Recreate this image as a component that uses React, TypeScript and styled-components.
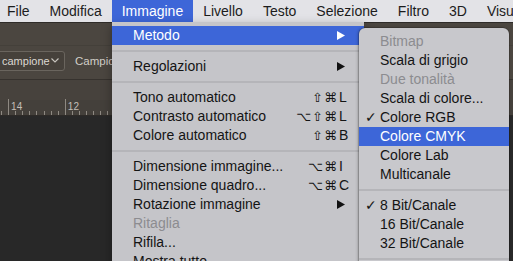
import React from "react";
import styled, { createGlobalStyle } from "styled-components";

const GlobalStyle = createGlobalStyle`
  html, body {
    margin: 0;
    padding: 0;
    background: #282828;
    overflow: hidden;
  }
  * {
    box-sizing: border-box;
  }
`;

const MENU_FONT = `"Liberation Sans", Arial, sans-serif`;
const GLYPH_FONT = `"DejaVu Sans", "Liberation Sans", sans-serif`;

interface MenuItem {
  label: string;
  disabled?: boolean;
  active?: boolean;
  checked?: boolean;
  submenu?: boolean;
  mods?: string;
  keyChar?: string;
  separator?: boolean;
}

const topMenus = [
  "File",
  "Modifica",
  "Immagine",
  "Livello",
  "Testo",
  "Selezione",
  "Filtro",
  "3D",
  "Visualizza",
];

const mainItems: MenuItem[] = [
  { label: "Metodo", submenu: true, active: true },
  { label: "", separator: true },
  { label: "Regolazioni", submenu: true },
  { label: "", separator: true },
  { label: "Tono automatico", mods: "⇧⌘", keyChar: "L" },
  { label: "Contrasto automatico", mods: "⌥⇧⌘", keyChar: "L" },
  { label: "Colore automatico", mods: "⇧⌘", keyChar: "B" },
  { label: "", separator: true },
  { label: "Dimensione immagine...", mods: "⌥⌘", keyChar: "I" },
  { label: "Dimensione quadro...", mods: "⌥⌘", keyChar: "C" },
  { label: "Rotazione immagine", submenu: true },
  { label: "Ritaglia", disabled: true },
  { label: "Rifila..." },
  { label: "Mostra tutto" },
];

const modeItems: MenuItem[] = [
  { label: "Bitmap", disabled: true },
  { label: "Scala di grigio" },
  { label: "Due tonalità", disabled: true },
  { label: "Scala di colore..." },
  { label: "Colore RGB", checked: true },
  { label: "Colore CMYK", active: true },
  { label: "Colore Lab" },
  { label: "Multicanale" },
  { label: "", separator: true },
  { label: "8 Bit/Canale", checked: true },
  { label: "16 Bit/Canale" },
  { label: "32 Bit/Canale" },
  { label: "", separator: true },
];

const rulerTicks = Array.from({ length: 17 }, (_, i) => i);

const Arrow = ({ color }: { color: string }) => (
  <svg width="8" height="9" viewBox="0 0 8 9">
    <path d="M0 0 L8 4.5 L0 9 Z" fill={color} />
  </svg>
);

const Chevron = () => (
  <svg width="8" height="5" viewBox="0 0 8 5">
    <path d="M0.5 0.5 L4 4 L7.5 0.5" stroke="#c9c5bf" strokeWidth="1.1" fill="none" />
  </svg>
);

const renderRows = (items: MenuItem[]) =>
  items.map((item, i) =>
    item.separator ? (
      <Separator key={i} />
    ) : (
      <Row key={i} $active={item.active} $disabled={item.disabled}>
        <Mark>{item.checked ? "✓" : ""}</Mark>
        <Label>{item.label}</Label>
        {item.submenu && (
          <ArrowBox>
            <Arrow color={item.active ? "#ffffff" : "#111111"} />
          </ArrowBox>
        )}
        {item.keyChar && (
          <Shortcut>
            <Mods>{item.mods}</Mods>
            <KeyChar>{item.keyChar}</KeyChar>
          </Shortcut>
        )}
      </Row>
    )
  );

const App = () => {
  return (
    <Screen>
      <GlobalStyle />
      <MenuBar>
        {topMenus.map((m) => (
          <TopItem key={m} $open={m === "Immagine"}>
            {m}
          </TopItem>
        ))}
      </MenuBar>
      <Workspace>
        <OptionsBar>
          <UpperStrip />
          <ControlsRow>
            <Select>
              <span>campione</span>
              <Chevron />
            </Select>
            <OptionLabel>Campione:</OptionLabel>
          </ControlsRow>
        </OptionsBar>
        <TabStrip />
        <Ruler>
          {rulerTicks.map((t) => (
            <Tick key={t} $major={t % 8 === 1}>
              {t === 1 && <TickNum>14</TickNum>}
              {t === 9 && <TickNum>12</TickNum>}
            </Tick>
          ))}
        </Ruler>
        <Canvas />
      </Workspace>

      <Dropdown>{renderRows(mainItems)}</Dropdown>
      <Submenu>{renderRows(modeItems)}</Submenu>
    </Screen>
  );
};

const Screen = styled.div`
  position: relative;
  width: 513px;
  height: 261px;
  overflow: hidden;
  display: flex;
  flex-direction: column;
  background: #282828;
  font-family: ${MENU_FONT};
`;

const MenuBar = styled.div`
  display: flex;
  height: 22px;
  flex-shrink: 0;
  margin-left: -3px;
  background: #e3e3e7;
  white-space: nowrap;
`;

const TopItem = styled.div<{ $open?: boolean }>`
  padding: 0 10px;
  height: 22px;
  line-height: 22px;
  font-size: 14px;
  color: ${(p) => (p.$open ? "#ffffff" : "#1c1c1c")};
  background: ${(p) => (p.$open ? "#3d66d8" : "transparent")};
`;

const Workspace = styled.div`
  flex: 1;
  display: flex;
  flex-direction: column;
`;

const OptionsBar = styled.div`
  height: 58px;
  display: flex;
  flex-direction: column;
  background: #4b4640;
  border-top: 1px solid #2f2c29;
  border-bottom: 1px solid #36322e;
`;

const UpperStrip = styled.div`
  height: 23px;
  border-bottom: 1px solid #44403a;
`;

const ControlsRow = styled.div`
  flex: 1;
  display: flex;
  align-items: center;
  gap: 10px;
  padding-bottom: 4px;
`;

const Select = styled.div`
  display: flex;
  align-items: center;
  justify-content: space-between;
  width: 72px;
  height: 20px;
  margin-left: -7px;
  padding: 0 5px 0 8px;
  border: 1px solid #6a655e;
  border-radius: 3px;
  background: #46413b;
  color: #dcd8d2;
  font-size: 11px;
`;

const OptionLabel = styled.span`
  color: #d2cec8;
  font-size: 11.5px;
  white-space: nowrap;
`;

const TabStrip = styled.div`
  height: 20px;
  background: #47423d;
`;

const Ruler = styled.div`
  height: 16px;
  display: flex;
  align-items: flex-end;
  padding-left: 1px;
  background: #44403b;
  border-bottom: 1px solid #2d2a27;
`;

const Tick = styled.div<{ $major?: boolean }>`
  position: relative;
  width: 7.1px;
  flex-shrink: 0;
  height: ${(p) => (p.$major ? "16px" : "4px")};
  border-left: 1px solid #8e8982;
`;

const TickNum = styled.span`
  position: absolute;
  left: 2px;
  top: 2px;
  font-size: 10px;
  color: #c3beb6;
`;

const Canvas = styled.div`
  flex: 1;
  background: #282828;
`;

const MenuPanel = styled.div`
  position: absolute;
  display: flex;
  flex-direction: column;
  font-family: ${MENU_FONT};
  font-size: 14px;
`;

const Dropdown = styled(MenuPanel)`
  left: 112px;
  top: 22px;
  width: 252px;
  height: 260px;
  padding-top: 3.5px;
  background: #c5c5c9;
  box-shadow: 0 4px 10px rgba(0, 0, 0, 0.35);
`;

const Submenu = styled(MenuPanel)`
  left: 359px;
  top: 28px;
  width: 150px;
  height: 260px;
  padding-top: 3.5px;
  background: #c8c8cc;
  border-radius: 6px 6px 0 0;
  box-shadow: -1px 0 3px rgba(0, 0, 0, 0.3), 0 0 0 0.5px rgba(0, 0, 0, 0.25);
  overflow: hidden;
`;

const Row = styled.div<{ $active?: boolean; $disabled?: boolean }>`
  display: flex;
  align-items: center;
  height: 19px;
  flex-shrink: 0;
  padding: 0 0 0 6px;
  white-space: nowrap;
  background: ${(p) => (p.$active ? "#3d66d8" : "transparent")};
  color: ${(p) => (p.$active ? "#ffffff" : p.$disabled ? "#8c8c90" : "#141414")};
`;

const Mark = styled.span`
  width: 15px;
  flex-shrink: 0;
  font-family: ${GLYPH_FONT};
  font-size: 14px;
  font-weight: bold;
`;

const Label = styled.span`
  flex: 1;
`;

const ArrowBox = styled.span`
  display: flex;
  align-items: center;
  width: 8px;
  margin-right: 19px;
`;

const Shortcut = styled.span`
  display: flex;
  align-items: center;
  margin-right: 14px;
`;

const Mods = styled.span`
  font-family: ${GLYPH_FONT};
  font-size: 13px;
  letter-spacing: 1px;
  text-align: right;
`;

const KeyChar = styled.span`
  width: 12px;
  padding-left: 1px;
`;

const Separator = styled.div`
  height: 12px;
  flex-shrink: 0;
  display: flex;
  align-items: center;
  &::after {
    content: "";
    flex: 1;
    height: 2px;
    background: #b5b5b9;
  }
`;

export default App;
